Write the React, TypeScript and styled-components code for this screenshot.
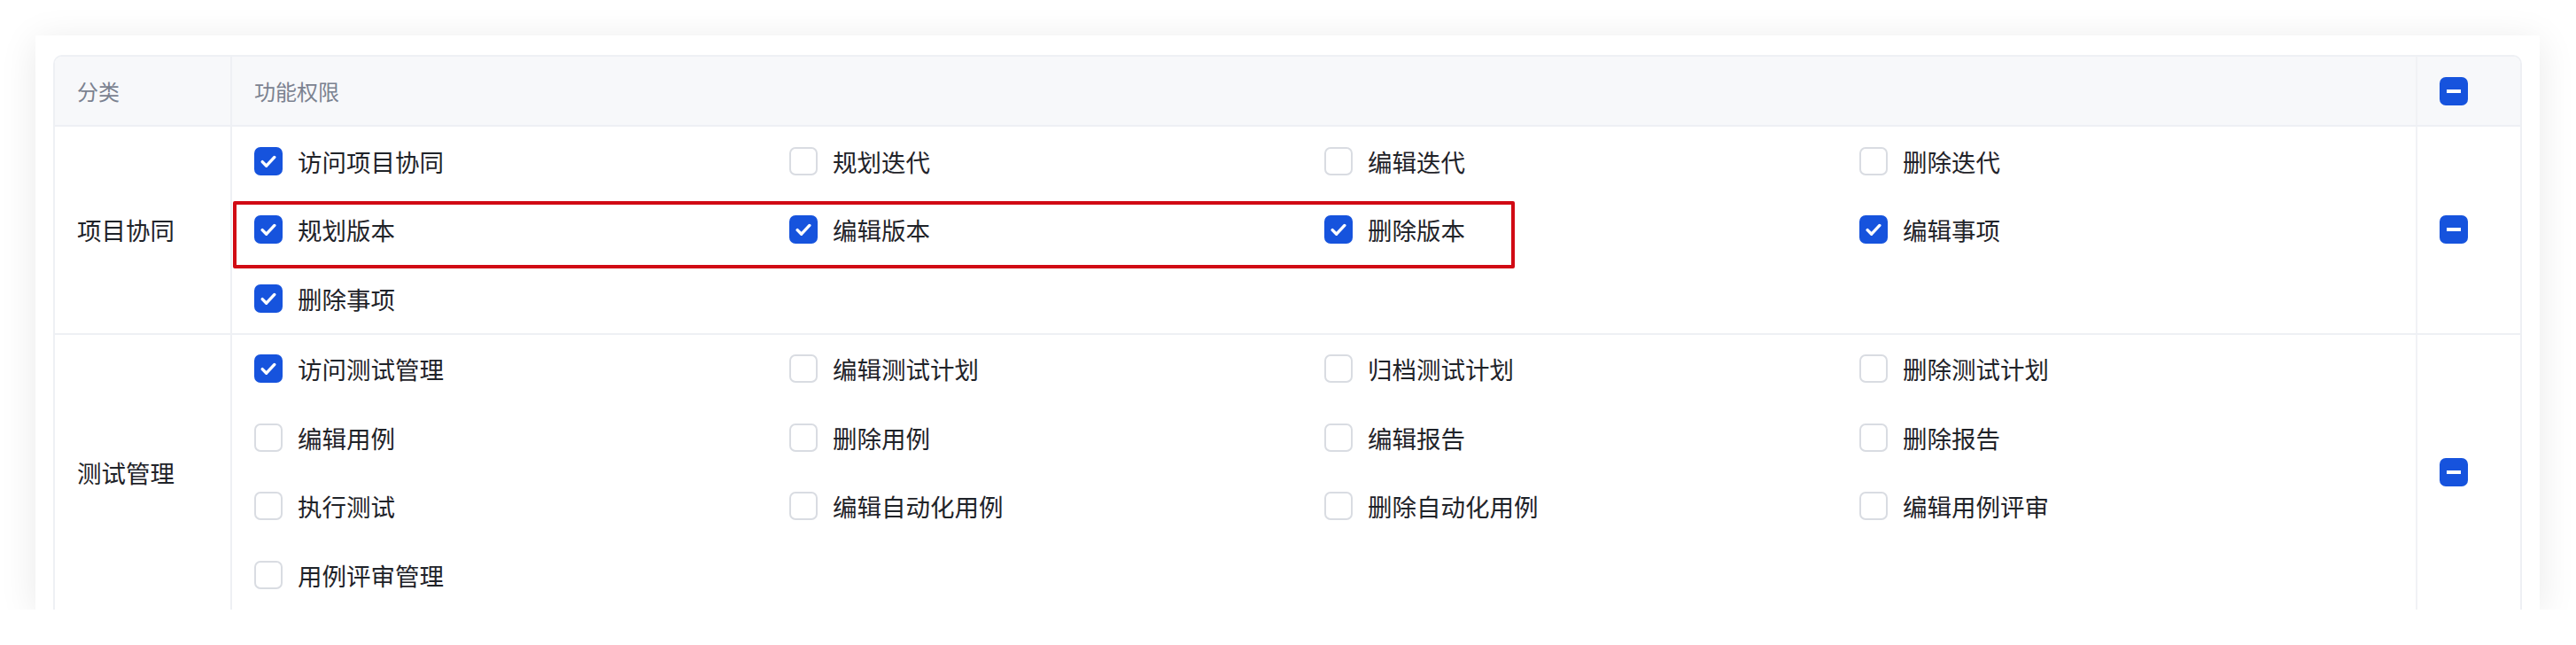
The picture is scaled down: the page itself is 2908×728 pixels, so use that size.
import React from 'react';
import styled, { createGlobalStyle } from 'styled-components';

const GlobalStyle = createGlobalStyle`
    html, body {
        margin: 0;
        padding: 0;
        background: #ffffff;
        font-family: 'Noto Sans CJK SC', 'Noto Sans', sans-serif;
    }
`;

const Card = styled.div`
    margin: 40px 41px 0 40px;
    height: 648px;
    padding: 22px 20px 0 20px;
    box-sizing: border-box;
    background: #ffffff;
    box-shadow: 0 6px 40px rgba(0, 0, 0, 0.09);
    overflow: hidden;
`;

const Table = styled.div`
    border: 2px solid #eef0f4;
    border-bottom: none;
    border-radius: 10px 10px 0 0;
    overflow: hidden;
`;

const Row = styled.div<{ $head?: boolean }>`
    display: grid;
    grid-template-columns: 198px 1fr 118px;
    background: ${(p) => (p.$head ? '#f7f8fa' : '#ffffff')};
    border-bottom: 2px solid #eef0f4;
    min-height: ${(p) => (p.$head ? '77px' : 'auto')};
`;

const Cell = styled.div<{ $head?: boolean; $last?: boolean }>`
    display: flex;
    align-items: center;
    padding-left: 25px;
    border-left: ${(p) => (p.$last ? '2px solid #f1f2f5' : 'none')};
    font-size: ${(p) => (p.$head ? '24px' : '27.5px')};
    color: ${(p) => (p.$head ? '#7b8290' : '#1f2329')};
    &:nth-child(2) {
        border-left: 2px solid #eef0f4;
    }
`;

const Grid = styled.div`
    position: relative;
    display: grid;
    grid-template-columns: repeat(4, 604px);
    align-self: stretch;
`;

const Item = styled.label`
    display: flex;
    align-items: center;
    gap: 17px;
    height: 77.5px;
    font-size: 27.5px;
    color: #1f2329;
    white-space: nowrap;
`;

const Box = styled.span<{ $on: boolean }>`
    width: 32px;
    height: 32px;
    box-sizing: border-box;
    border-radius: 7px;
    flex-shrink: 0;
    display: flex;
    align-items: center;
    justify-content: center;
    background: ${(p) => (p.$on ? '#1653dd' : '#ffffff')};
    border: ${(p) => (p.$on ? 'none' : '2px solid #d9dce2')};
`;

const MinusBox = styled.span`
    width: 32px;
    height: 32px;
    border-radius: 7px;
    background: #1653dd;
    display: flex;
    align-items: center;
    justify-content: center;
    &::after {
        content: '';
        width: 16px;
        height: 4px;
        background: #ffffff;
    }
`;

const Highlight = styled.div`
    position: absolute;
    left: -24px;
    top: 84px;
    width: 1447px;
    height: 76px;
    box-sizing: border-box;
    border: 4px solid #d10a14;
    border-radius: 2px;
    pointer-events: none;
`;

type Perm = [string, boolean];

const groups: { name: string; perms: Perm[]; mark?: boolean }[] = [
    {
        name: '项目协同',
        mark: true,
        perms: [
            ['访问项目协同', true],
            ['规划迭代', false],
            ['编辑迭代', false],
            ['删除迭代', false],
            ['规划版本', true],
            ['编辑版本', true],
            ['删除版本', true],
            ['编辑事项', true],
            ['删除事项', true],
        ],
    },
    {
        name: '测试管理',
        perms: [
            ['访问测试管理', true],
            ['编辑测试计划', false],
            ['归档测试计划', false],
            ['删除测试计划', false],
            ['编辑用例', false],
            ['删除用例', false],
            ['编辑报告', false],
            ['删除报告', false],
            ['执行测试', false],
            ['编辑自动化用例', false],
            ['删除自动化用例', false],
            ['编辑用例评审', false],
            ['用例评审管理', false],
        ],
    },
];

function Check({ on }: { on: boolean }) {
    return (
        <Box $on={on}>
            {on && (
                <svg width='26' height='26' viewBox='0 0 16 16' fill='none'>
                    <path
                        d='M3.8 8.4l2.8 2.8L12.2 5.2'
                        stroke='#ffffff'
                        strokeWidth='2.1'
                        strokeLinecap='round'
                        strokeLinejoin='round'
                    />
                </svg>
            )}
        </Box>
    );
}

export default function App() {
    return (
        <>
            <GlobalStyle />
            <Card>
                <Table>
                    <Row $head>
                        <Cell $head>分类</Cell>
                        <Cell $head>功能权限</Cell>
                        <Cell $head $last>
                            <MinusBox />
                        </Cell>
                    </Row>
                    {groups.map((g) => (
                        <Row key={g.name}>
                            <Cell>{g.name}</Cell>
                            <Cell>
                                <Grid>
                                    {g.perms.map(([label, on]) => (
                                        <Item key={label}>
                                            <Check on={on} />
                                            {label}
                                        </Item>
                                    ))}
                                    {g.mark && <Highlight />}
                                </Grid>
                            </Cell>
                            <Cell $last>
                                <MinusBox />
                            </Cell>
                        </Row>
                    ))}
                </Table>
            </Card>
        </>
    );
}
